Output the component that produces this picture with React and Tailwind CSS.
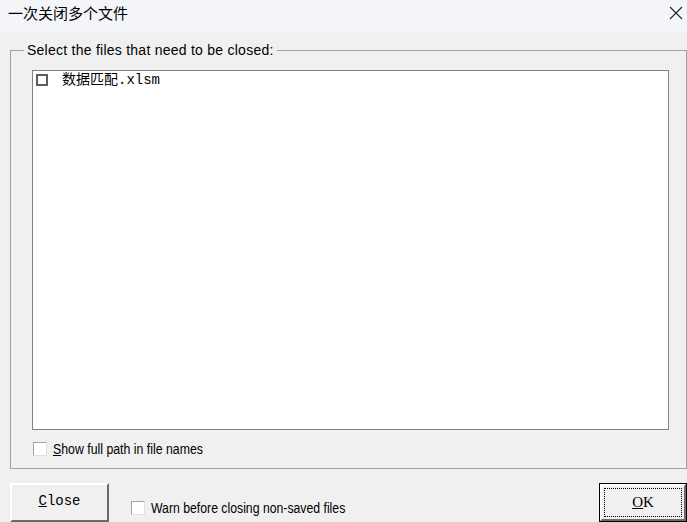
import React from 'react';

const sans = { fontFamily: '"Liberation Sans", Arial, sans-serif' };

const FlatCheck = () => (
  <span className="inline-block h-[14px] w-[14px] shrink-0 border border-t-[#a3a3a3] border-l-[#a3a3a3] border-r-[#e2e2e2] border-b-[#e2e2e2] bg-white" />
);

const App = () => {
  return (
    <div className="flex h-[522px] w-[687px] flex-col overflow-hidden bg-[#f0f0f0]">
      {/* title bar */}
      <div className="flex h-[32px] shrink-0 items-start justify-between bg-[#f3f5f8] pl-[8px] pr-[3px] pt-[3px]">
        <span className="text-[15px] leading-[20px] text-black" style={{ fontFamily: '"Noto Sans CJK SC", sans-serif' }}>
          一次关闭多个文件
        </span>
        <svg width="14" height="14" viewBox="0 0 14 14" className="mt-[3px] mr-[1px]">
          <path d="M1 1 L13 13 M13 1 L1 13" stroke="#222" strokeWidth="1.1" fill="none" />
        </svg>
      </div>

      {/* group box */}
      <fieldset className="ml-[10px] mt-[10px] border border-[#a0a0a0] px-0 pb-[11px]">
        <legend className="ml-[13px] px-[3px] text-[14px] leading-[16px] tracking-[0.25px] text-black" style={sans}>
          Select the files that need to be closed:
        </legend>
        <div className="ml-[21px] mr-[17px] mt-[12px] h-[360px] border border-[#828282] bg-white">
          <div className="flex items-center pl-[3px] pt-[2px]">
            <span className="inline-block h-[12px] w-[12px] border-2 border-[#5a5a5a] bg-white" />
            <span
              className="ml-[14px] text-[14px] leading-[14px] text-black"
              style={{ fontFamily: '"Liberation Mono", "Noto Sans CJK SC", monospace' }}
            >
              数据匹配.xlsm
            </span>
          </div>
        </div>
        <div className="ml-[22px] mt-[11px] flex items-center">
          <FlatCheck />
          <span
            className="ml-[6px] inline-block origin-left scale-x-[0.88] whitespace-nowrap text-[14px] leading-[16px] text-black"
            style={sans}
          >
            <span className="underline">S</span>how full path in file names
          </span>
        </div>
      </fieldset>

      {/* bottom row */}
      <div className="mt-[14px] flex items-start">
        <button
          type="button"
          className="ml-[10px] flex h-[39px] w-[99px] items-center justify-center border-2 border-t-white border-l-white border-r-[#6a6a6a] border-b-[#6a6a6a] bg-[#f0f0f0] text-[14px] text-black"
          style={{ fontFamily: '"Liberation Mono", monospace' }}
        >
          <span className="pb-[2px]">
            <span className="underline">C</span>lose
          </span>
        </button>
        <div className="ml-[22px] mt-[17px] flex items-center">
          <FlatCheck />
          <span
            className="ml-[6px] inline-block origin-left scale-x-[0.875] whitespace-nowrap text-[14px] leading-[16px] text-black"
            style={sans}
          >
            Warn before closing non-saved files
          </span>
        </div>
        <button
          type="button"
          className="ml-auto h-[39px] w-[88px] border border-black bg-[#f0f0f0] p-0"
        >
          <div className="h-full w-full border-2 border-t-white border-l-white border-r-[#6a6a6a] border-b-[#6a6a6a] p-[2px]">
            <div
              className="flex h-full w-full items-center justify-center border border-dotted border-black text-[15px] text-black"
              style={{ fontFamily: '"Liberation Serif", serif' }}
            >
              <span>
                <span className="underline">O</span>K
              </span>
            </div>
          </div>
        </button>
      </div>
    </div>
  );
};

export default App;
